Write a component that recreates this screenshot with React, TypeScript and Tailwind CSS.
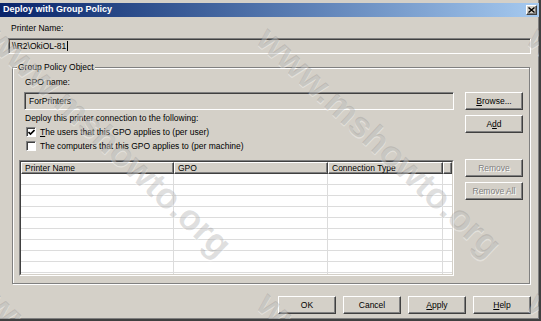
import type { ReactNode } from 'react';

// classic 3D edges
const raised =
  'border border-t-white border-l-white border-r-[#404040] border-b-[#404040] shadow-[inset_-1px_-1px_0_#808080]';
const sunken =
  'border border-t-[#808080] border-l-[#808080] border-r-white border-b-white shadow-[inset_1px_1px_0_#404040]';

function Btn({ children, disabled, className = '' }: { children: ReactNode; disabled?: boolean; className?: string }) {
  return (
    <button
      type="button"
      className={`flex h-[18px] w-[58px] items-center justify-center bg-[#d4d0c8] leading-none ${raised} ${
        disabled ? 'text-[#808080] [text-shadow:1px_1px_0_#fff]' : 'text-black'
      } ${className}`}
    >
      {children}
    </button>
  );
}

function Check({ checked, children }: { checked?: boolean; children: ReactNode }) {
  return (
    <div className="ml-[7px] mt-[2px] flex h-[12px] items-center gap-[4px]">
      <div className={`flex h-[10px] w-[10px] items-center justify-center bg-white ${sunken}`}>
        {checked && (
          <svg width="7" height="7" viewBox="0 0 7 7">
            <path d="M0.5 3 L2.5 5 L6.5 1" stroke="#000" strokeWidth="1.6" fill="none" />
          </svg>
        )}
      </div>
      <span>{children}</span>
    </div>
  );
}

// site watermark laid over the screenshot
function Watermark({ x, y }: { x: number; y: number }) {
  return (
    <div
      className="pointer-events-none absolute origin-top-left rotate-[43deg] whitespace-nowrap text-[36px] font-bold leading-none text-[rgba(110,110,110,0.22)] [text-shadow:1px_1px_0_rgba(255,255,255,0.35)]"
      style={{ left: x, top: y }}
    >
      www.mshowto.org
    </div>
  );
}

const cols = ['w-[153px]', 'w-[154px]', 'w-[115px]', 'flex-1'];
const rows = Array.from({ length: 10 }, (_, i) => i);

export default function App() {
  return (
    <div className="relative flex h-[321px] w-[541px] flex-col overflow-hidden border-r-2 border-b-2 border-r-[#404040] border-b-[#404040] bg-[#d4d0c8] font-['Liberation_Sans',Arial,sans-serif] text-[8.5px] text-black shadow-[inset_-1px_-1px_0_#808080]">
      {/* title bar */}
      <div className="mt-[3px] flex h-[14px] items-center justify-between bg-linear-to-r from-[#0a246a] to-[#a6caf0] pl-[3px] pr-[2px]">
        <span className="text-[9px] font-bold text-white">Deploy with Group Policy</span>
        <div className={`flex h-[10px] w-[11px] items-center justify-center bg-[#d4d0c8] ${raised}`}>
          <svg width="7" height="6" viewBox="0 0 7 6">
            <path d="M0.5 0.5 L6.5 5.5 M6.5 0.5 L0.5 5.5" stroke="#000" strokeWidth="1.4" />
          </svg>
        </div>
      </div>

      <div className="flex flex-1 flex-col px-[8px]">
        <div className="ml-[3px] mt-[5px] h-[12px] leading-[12px]">Printer Name:</div>
        <div className={`mt-[4px] flex h-[16px] items-center pl-[3px] ${sunken}`}>
          <span>\\R2\OkiOL-81</span>
          <span className="ml-[1px] h-[10px] w-px bg-black" />
        </div>

        {/* group box */}
        <div className="relative ml-[4px] mr-[1px] mt-[13px] flex gap-[11px] border border-[#808080] pb-[7px] pl-[6px] pr-[6px] pt-[8px] shadow-[inset_1px_1px_0_#fff,1px_1px_0_#fff]">
          <span className="absolute -top-[7px] left-[4px] bg-[#d4d0c8] px-[1px] leading-[12px]">Group Policy Object</span>

          <div className="flex flex-1 flex-col">
            <div className="ml-[6px] h-[12px] leading-[12px]">GPO name:</div>
            <div className={`ml-[5px] mt-[4px] flex h-[18px] items-center pl-[4px] ${sunken}`}>ForPrinters</div>
            <div className="ml-[6px] mt-[2px] h-[12px] leading-[12px]">Deploy this printer connection to the following:</div>
            <Check checked>
              <span className="underline">T</span>he users that this GPO applies to (per user)
            </Check>
            <Check>The computers that this GPO applies to (per machine)</Check>

            {/* list view */}
            <div className="mt-[8px] h-[116px] border border-t-[#808080] border-l-[#808080] border-r-white border-b-white">
              <div className="flex h-full flex-col overflow-hidden border border-t-[#404040] border-l-[#404040] border-r-[#d4d0c8] border-b-[#d4d0c8] bg-white">
                <div className="flex h-[12px] shrink-0">
                  {['Printer Name', 'GPO', 'Connection Type', ''].map((h, i) => (
                    <div key={i} className={`${cols[i]} flex items-center bg-[#d4d0c8] pl-[3px] leading-none ${raised}`}>
                      {h}
                    </div>
                  ))}
                </div>
                {rows.map((r) => (
                  <div key={r} className="flex h-[11px] shrink-0 border-b border-[#dcdcdc]">
                    {cols.map((c, i) => (
                      <div key={i} className={`${c} ${i < 3 ? 'border-r border-[#dcdcdc]' : ''}`} />
                    ))}
                  </div>
                ))}
              </div>
            </div>
          </div>

          <div className="flex w-[58px] flex-col">
            <Btn className="mt-[16px]">
              <span className="underline">B</span>rowse...
            </Btn>
            <Btn className="mt-[5px]">
              A<span className="underline">d</span>d
            </Btn>
            <Btn className="mt-[26px]" disabled>
              Remove
            </Btn>
            <Btn className="mt-[5px]" disabled>
              Remove All
            </Btn>
          </div>
        </div>

        {/* dialog buttons */}
        <div className="mt-[12px] flex justify-end gap-[7px]">
          <Btn>OK</Btn>
          <Btn>Cancel</Btn>
          <Btn>
            <span className="underline">A</span>pply
          </Btn>
          <Btn>
            <span className="underline">H</span>elp
          </Btn>
        </div>
      </div>

      <Watermark x={5} y={20} />
      <Watermark x={275} y={20} />
      <Watermark x={545} y={20} />
      <Watermark x={5} y={285} />
      <Watermark x={275} y={285} />
      <Watermark x={545} y={285} />
    </div>
  );
}
